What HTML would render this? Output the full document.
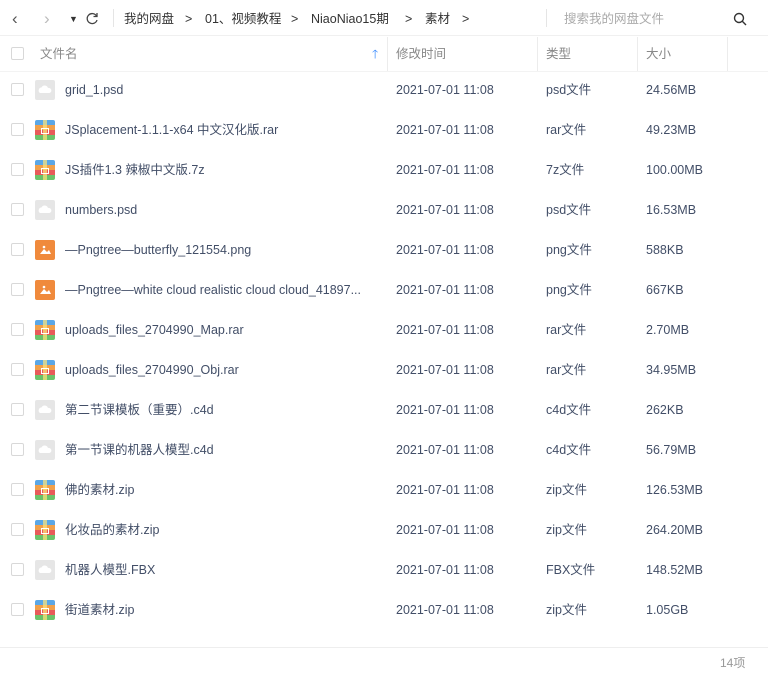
<!DOCTYPE html>
<html><head><meta charset="utf-8"><style>
*{margin:0;padding:0;box-sizing:border-box}
body{width:768px;height:679px;background:#fff;font-family:"Liberation Sans","Noto Sans CJK SC",sans-serif;color:#424e67;font-size:12.5px;position:relative;overflow:hidden}
.abs{position:absolute;white-space:nowrap}
.lt{position:absolute;white-space:nowrap;height:36px;line-height:36px;top:1px}
.top{position:absolute;left:0;top:0;width:768px;height:36px;border-bottom:1px solid #f0f0f0}
.hdr{position:absolute;top:35px;height:36px;left:0;width:768px}
.cb{position:absolute;left:11px;width:13px;height:13px;border:1px solid #d8d8d8;border-radius:2px;background:#fff}
.row{position:absolute;left:0;width:768px;height:40px}
.row .t{position:absolute;top:0;height:40px;line-height:40px;white-space:nowrap;color:#424e67}
.ico{position:absolute;left:35px;top:10px;width:20px;height:20px;border-radius:2px}
.sep{position:absolute;top:37px;height:34px;width:1px;background:#ececec}
</style></head><body>
<div class="top">
<span class="lt" style="left:12px;font-size:17px;color:#555">&#8249;</span>
<span class="lt" style="left:44px;font-size:17px;color:#bbb">&#8250;</span>
<span class="lt" style="left:69px;font-size:9px;color:#333">&#9660;</span>
<svg class="abs" style="left:86px;top:12px" width="13" height="13" viewBox="0 0 13 13"><path d="M10.5 4A5 5 0 1 0 11 8" fill="none" stroke="#444" stroke-width="1.3"/><path d="M11 1v3.5H7.5" fill="none" stroke="#444" stroke-width="1.3"/></svg>
<div class="abs" style="left:113px;top:9px;width:1px;height:18px;background:#e5e5e5"></div>
<span class="lt" style="left:124px;color:#333">我的网盘</span>
<span class="lt" style="left:185px;color:#333">&gt;</span>
<span class="lt" style="left:205px;color:#333">01、视频教程</span>
<span class="lt" style="left:291px;color:#333">&gt;</span>
<span class="lt" style="left:311px;color:#333">NiaoNiao15期</span>
<span class="lt" style="left:405px;color:#333">&gt;</span>
<span class="lt" style="left:425px;color:#333">素材</span>
<span class="lt" style="left:462px;color:#333">&gt;</span>
<div class="abs" style="left:546px;top:9px;width:1px;height:18px;background:#e5e5e5"></div>
<span class="lt" style="left:564px;color:#aaa">搜索我的网盘文件</span>
<svg class="abs" style="left:733px;top:12px" width="14" height="14" viewBox="0 0 14 14"><circle cx="6" cy="6" r="4.5" fill="none" stroke="#333" stroke-width="1.4"/><path d="M9.3 9.3L13 13" stroke="#333" stroke-width="1.4"/></svg>
</div>
<div class="hdr">
<div class="cb" style="top:12px"></div>
<span class="lt" style="left:40px;color:#888">文件名</span>
<span class="lt" style="left:372px;color:#3b8cff;font-size:12px">&#129105;</span>
<span class="lt" style="left:396px;color:#888">修改时间</span>
<span class="lt" style="left:546px;color:#888">类型</span>
<span class="lt" style="left:646px;color:#888">大小</span>
</div>
<div class="sep" style="left:387px"></div><div class="sep" style="left:537px"></div><div class="sep" style="left:637px"></div><div class="sep" style="left:727px"></div>
<div class="abs" style="left:0;top:71px;width:768px;height:1px;background:#f3f3f3"></div>
<div id="rows"></div>
<div class="abs" style="left:0;top:647px;width:768px;height:1px;background:#eee"></div>
<span class="abs" style="left:720px;top:655px;line-height:16px;color:#999;font-size:12px">14项</span>
<script>
var d=[["p","grid_1.psd","psd文件","24.56MB"],["r","JSplacement-1.1.1-x64 中文汉化版.rar","rar文件","49.23MB"],["r","JS插件1.3 辣椒中文版.7z","7z文件","100.00MB"],["p","numbers.psd","psd文件","16.53MB"],["o","—Pngtree—butterfly_121554.png","png文件","588KB"],["o","—Pngtree—white cloud realistic cloud cloud_41897...","png文件","667KB"],["r","uploads_files_2704990_Map.rar","rar文件","2.70MB"],["r","uploads_files_2704990_Obj.rar","rar文件","34.95MB"],["p","第二节课模板（重要）.c4d","c4d文件","262KB"],["p","第一节课的机器人模型.c4d","c4d文件","56.79MB"],["r","佛的素材.zip","zip文件","126.53MB"],["r","化妆品的素材.zip","zip文件","264.20MB"],["p","机器人模型.FBX","FBX文件","148.52MB"],["r","街道素材.zip","zip文件","1.05GB"]];
var h="";
d.forEach(function(r,i){
var ic;
if(r[0]=="p")ic='<div class="ico" style="background:#e6e6e6"><svg width="20" height="20"><path d="M5 13a3 3 0 0 1 1.5-5.5A3.5 3.5 0 0 1 13 8a2.5 2.5 0 0 1 1.5 5z" fill="#fff"/></svg></div>';
else if(r[0]=="o")ic='<div class="ico" style="background:#f08a3c"><svg width="20" height="20"><path d="M5 14l4-5 3 3 2-2 2 4z" fill="#fff"/><circle cx="9" cy="7" r="1.3" fill="#fff"/></svg></div>';
else ic='<div class="ico" style="background:linear-gradient(#5aa7e6 0 25%,#f0a04a 25% 50%,#e85a5a 50% 75%,#6cc26a 75%)"><div style="position:absolute;left:8px;top:0;width:4px;height:20px;background:rgba(255,230,120,.7)"></div><div style="position:absolute;left:6px;top:8px;width:8px;height:6px;border:1px solid #fff"></div></div>';
h+='<div class="row" style="top:'+(70+i*40)+'px"><div class="cb" style="top:13px"></div>'+ic.replace('top:10px','top:9px')+'<span class="t" style="left:65px">'+r[1]+'</span><span class="t" style="left:396px">2021-07-01 11:08</span><span class="t" style="left:546px">'+r[2]+'</span><span class="t" style="left:646px">'+r[3]+'</span></div>';
});
document.getElementById("rows").innerHTML=h;
</script>
</body></html>
